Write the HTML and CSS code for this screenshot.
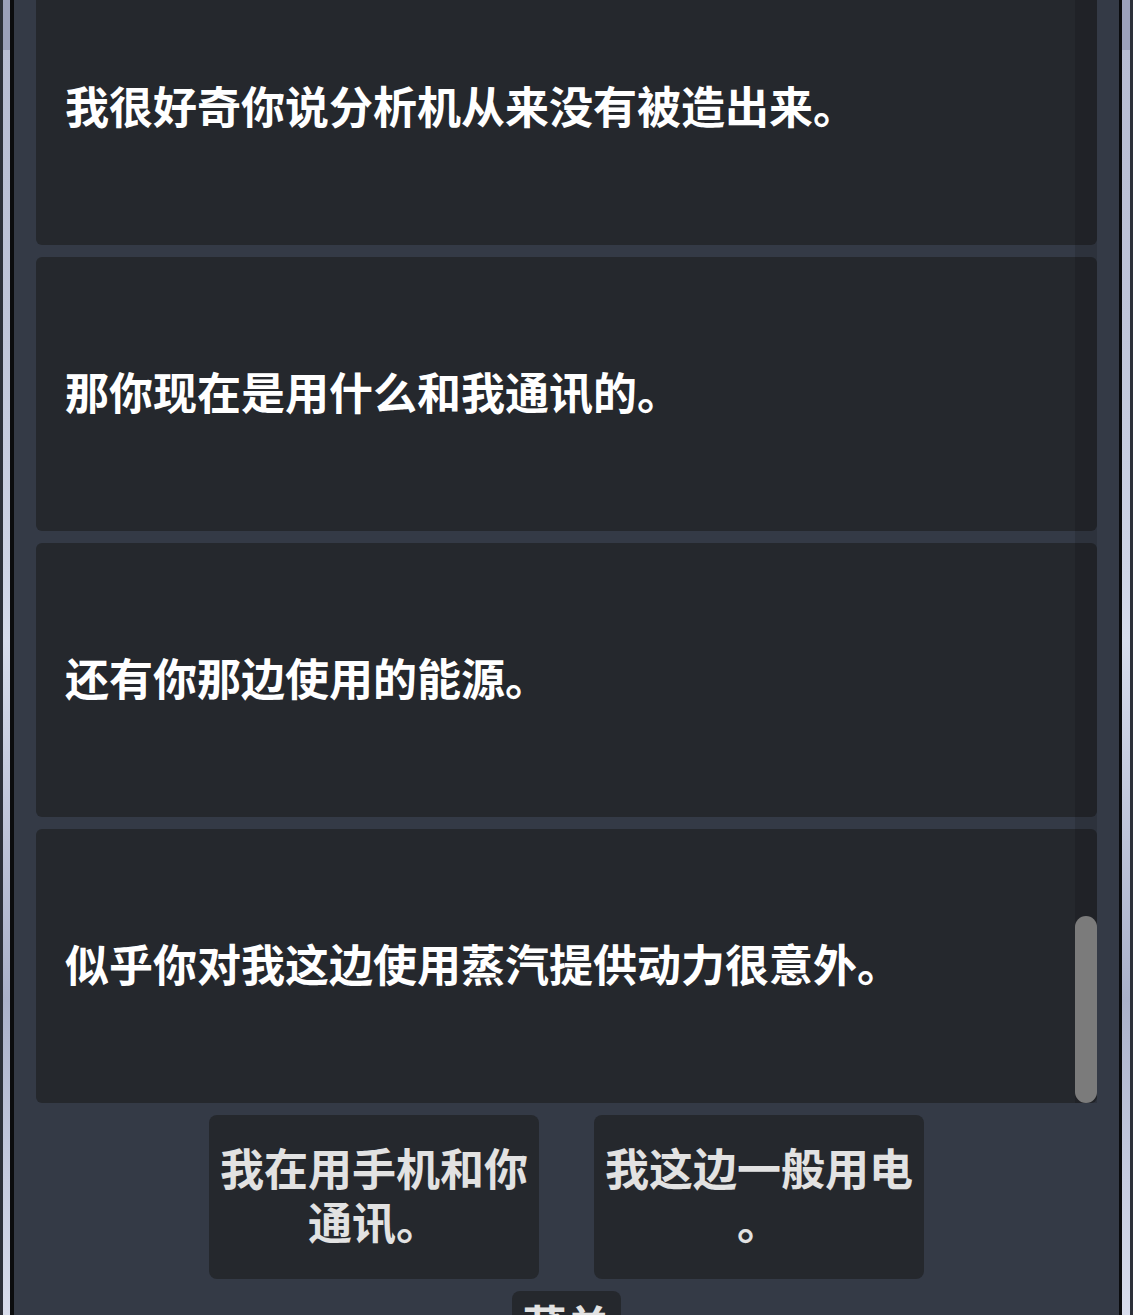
FILE: index.html
```html
<!DOCTYPE html>
<html lang="zh-CN">
<head>
    <meta charset="UTF-8">
    <meta name="viewport" content="width=device-width, initial-scale=1.0">
    <title>对话</title>
    <link rel="stylesheet" href="styles.css">
</head>
<body>
    <div class="edge"></div>
    <div class="strip"></div>
    <div class="rule"></div>

    <main class="app">
        <!-- message log, scrolled down to the end -->
        <section class="log">
            <div class="msgList">
                <div class="msg">我很好奇你说分析机从来没有被造出来。</div>
                <div class="msg">那你现在是用什么和我通讯的。</div>
                <div class="msg">还有你那边使用的能源。</div>
                <div class="msg">似乎你对我这边使用蒸汽提供动力很意外。</div>
            </div>
            <div class="scrollTrack">
                <div class="scrollThumb"></div>
            </div>
        </section>

        <!-- reply choices -->
        <section class="replies">
            <div class="choiceRow">
                <button class="choice">我在用手机和你通讯。</button>
                <button class="choice">我这边一般用电。</button>
            </div>
            <button class="menuBtn">菜单</button>
        </section>
    </main>

    <div class="rule rightRule"></div>
    <div class="strip rightStrip"></div>
    <div class="edge"></div>
</body>
</html>
```

FILE: styles.css
```css
/* page frame */
html, body {
    margin: 0;
    height: 1315px;
    overflow: hidden;
}

body {
    display: flex;
    background-color: #2a2e36;
    font-family: "Noto Sans CJK SC", "Noto Sans", sans-serif;
}

/* thin bars down both sides of the window */
.edge {
    width: 3px;
    background-color: #2c3039;
}

.strip {
    width: 7px;
    background: linear-gradient(#9ba1bb 0, #9ba1bb 50px, #b6bcd2 50px, #bfc5d9 320px, #cdd3e5 560px, #d6dcec 640px, #c2c8dc 800px, #aab1ca 1000px, #c6cce0 1180px, #d8ddec 1315px);
}

.rightStrip {
    width: 8px;
}

.rule {
    width: 4px;
    background-color: #0b0c0e;
}

.rightRule {
    width: 3px;
}

/* main column */
.app {
    flex: 1;
    display: flex;
    flex-direction: column;
    background-color: #343a46;
    overflow: hidden;
}

/* message log */
.log {
    position: relative;
    height: 1103px;
    flex-shrink: 0;
    overflow: hidden;
    padding: 0 22px;
}

.msgList {
    display: flex;
    flex-direction: column;
    gap: 12px;
    margin-top: -29px;
}

.msg {
    height: 274px;
    box-sizing: border-box;
    display: flex;
    align-items: center;
    padding: 0 29px 7px;
    border-radius: 6px;
    background-color: #25282d;
    color: #ffffff;
    font-size: 44px;
    font-weight: 700;
}

/* overlay scrollbar */
.scrollTrack {
    position: absolute;
    top: 0;
    right: 22px;
    width: 22px;
    height: 1103px;
    background-color: rgba(0, 0, 0, 0.13);
}

.scrollThumb {
    position: absolute;
    top: 916px;
    left: 0;
    width: 22px;
    height: 187px;
    border-radius: 11px;
    background-color: #7b7b7b;
}

/* reply choices */
.replies {
    display: flex;
    flex-direction: column;
    align-items: center;
    gap: 12px;
    padding-top: 12px;
}

.choiceRow {
    display: flex;
    gap: 55px;
}

button {
    border: 0;
    font-family: inherit;
    color: #e2e2e2;
    background-color: #25282d;
    border-radius: 8px;
}

.choice {
    width: 330px;
    height: 164px;
    padding: 0 8px 6px;
    font-size: 44px;
    font-weight: 600;
    line-height: 54px;
    text-align: center;
    line-break: anywhere;
}

.menuBtn {
    width: 109px;
    height: 80px;
    padding-bottom: 20px;
    font-size: 44px;
    font-weight: 600;
}
```
